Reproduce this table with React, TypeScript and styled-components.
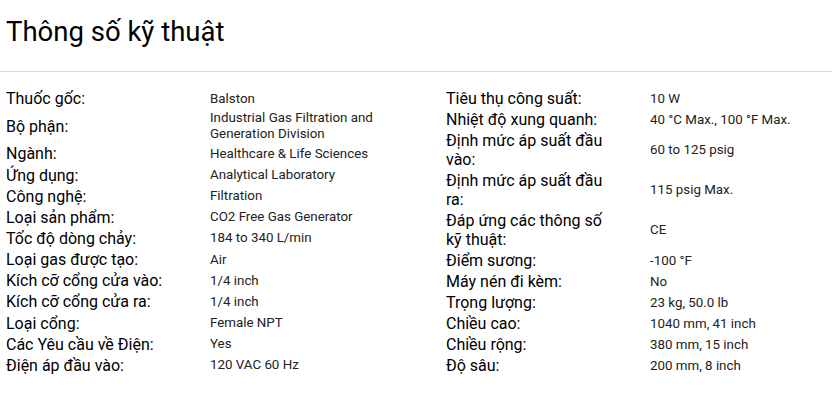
import React from "react";
import styled, { createGlobalStyle } from "styled-components";

const GlobalStyle = createGlobalStyle`
  html, body { margin: 0; padding: 0; background: #fff; }
  body { font-family: Roboto, "Noto Sans", Arial, sans-serif; }
`;

const Page = styled.div`
  width: 832px;
  font-family: Roboto, "Noto Sans", Arial, sans-serif;
`;

const Header = styled.header`
  padding: 16px 6px 23px;
  border-bottom: 1px solid #d9d9d9;
`;

const Title = styled.h2`
  margin: 0;
  font-size: 27.5px;
  line-height: 32px;
  font-weight: 400;
  color: #000;
`;

const Specs = styled.div`
  display: grid;
  grid-template-columns: 440px 1fr;
  padding: 16px 0 0 6px;
`;

const Column = styled.dl`
  margin: 0;
  display: grid;
  grid-template-columns: 165px 200px;
  column-gap: 39px;
  align-items: center;
`;

const Label = styled.dt`
  padding: 1px 0;
  font-size: 16px;
  line-height: 19px;
  color: #000;
`;

const Value = styled.dd`
  margin: 0;
  padding: 1px 0;
  font-size: 13.33px;
  line-height: 16px;
  color: #222;
`;

const left: [string, string][] = [
  ["Thuốc gốc:", "Balston"],
  ["Bộ phận:", "Industrial Gas Filtration and Generation Division"],
  ["Ngành:", "Healthcare & Life Sciences"],
  ["Ứng dụng:", "Analytical Laboratory"],
  ["Công nghệ:", "Filtration"],
  ["Loại sản phẩm:", "CO2 Free Gas Generator"],
  ["Tốc độ dòng chảy:", "184 to 340 L/min"],
  ["Loại gas được tạo:", "Air"],
  ["Kích cỡ cổng cửa vào:", "1/4 inch"],
  ["Kích cỡ cổng cửa ra:", "1/4 inch"],
  ["Loại cổng:", "Female NPT"],
  ["Các Yêu cầu về Điện:", "Yes"],
  ["Điện áp đầu vào:", "120 VAC 60 Hz"],
];

const right: [string, string][] = [
  ["Tiêu thụ công suất:", "10 W"],
  ["Nhiệt độ xung quanh:", "40 °C Max., 100 °F Max."],
  ["Định mức áp suất đầu vào:", "60 to 125 psig"],
  ["Định mức áp suất đầu ra:", "115 psig Max."],
  ["Đáp ứng các thông số kỹ thuật:", "CE"],
  ["Điểm sương:", "-100 °F"],
  ["Máy nén đi kèm:", "No"],
  ["Trọng lượng:", "23 kg, 50.0 lb"],
  ["Chiều cao:", "1040 mm, 41 inch"],
  ["Chiều rộng:", "380 mm, 15 inch"],
  ["Độ sâu:", "200 mm, 8 inch"],
];

const SpecColumn = ({ items }: { items: [string, string][] }) => (
  <Column>
    {items.map(([k, v]) => (
      <React.Fragment key={k}>
        <Label>{k}</Label>
        <Value>{v}</Value>
      </React.Fragment>
    ))}
  </Column>
);

export default function App() {
  return (
    <Page>
      <GlobalStyle />
      <Header>
        <Title>Thông số kỹ thuật</Title>
      </Header>
      <Specs>
        <SpecColumn items={left} />
        <SpecColumn items={right} />
      </Specs>
    </Page>
  );
}
